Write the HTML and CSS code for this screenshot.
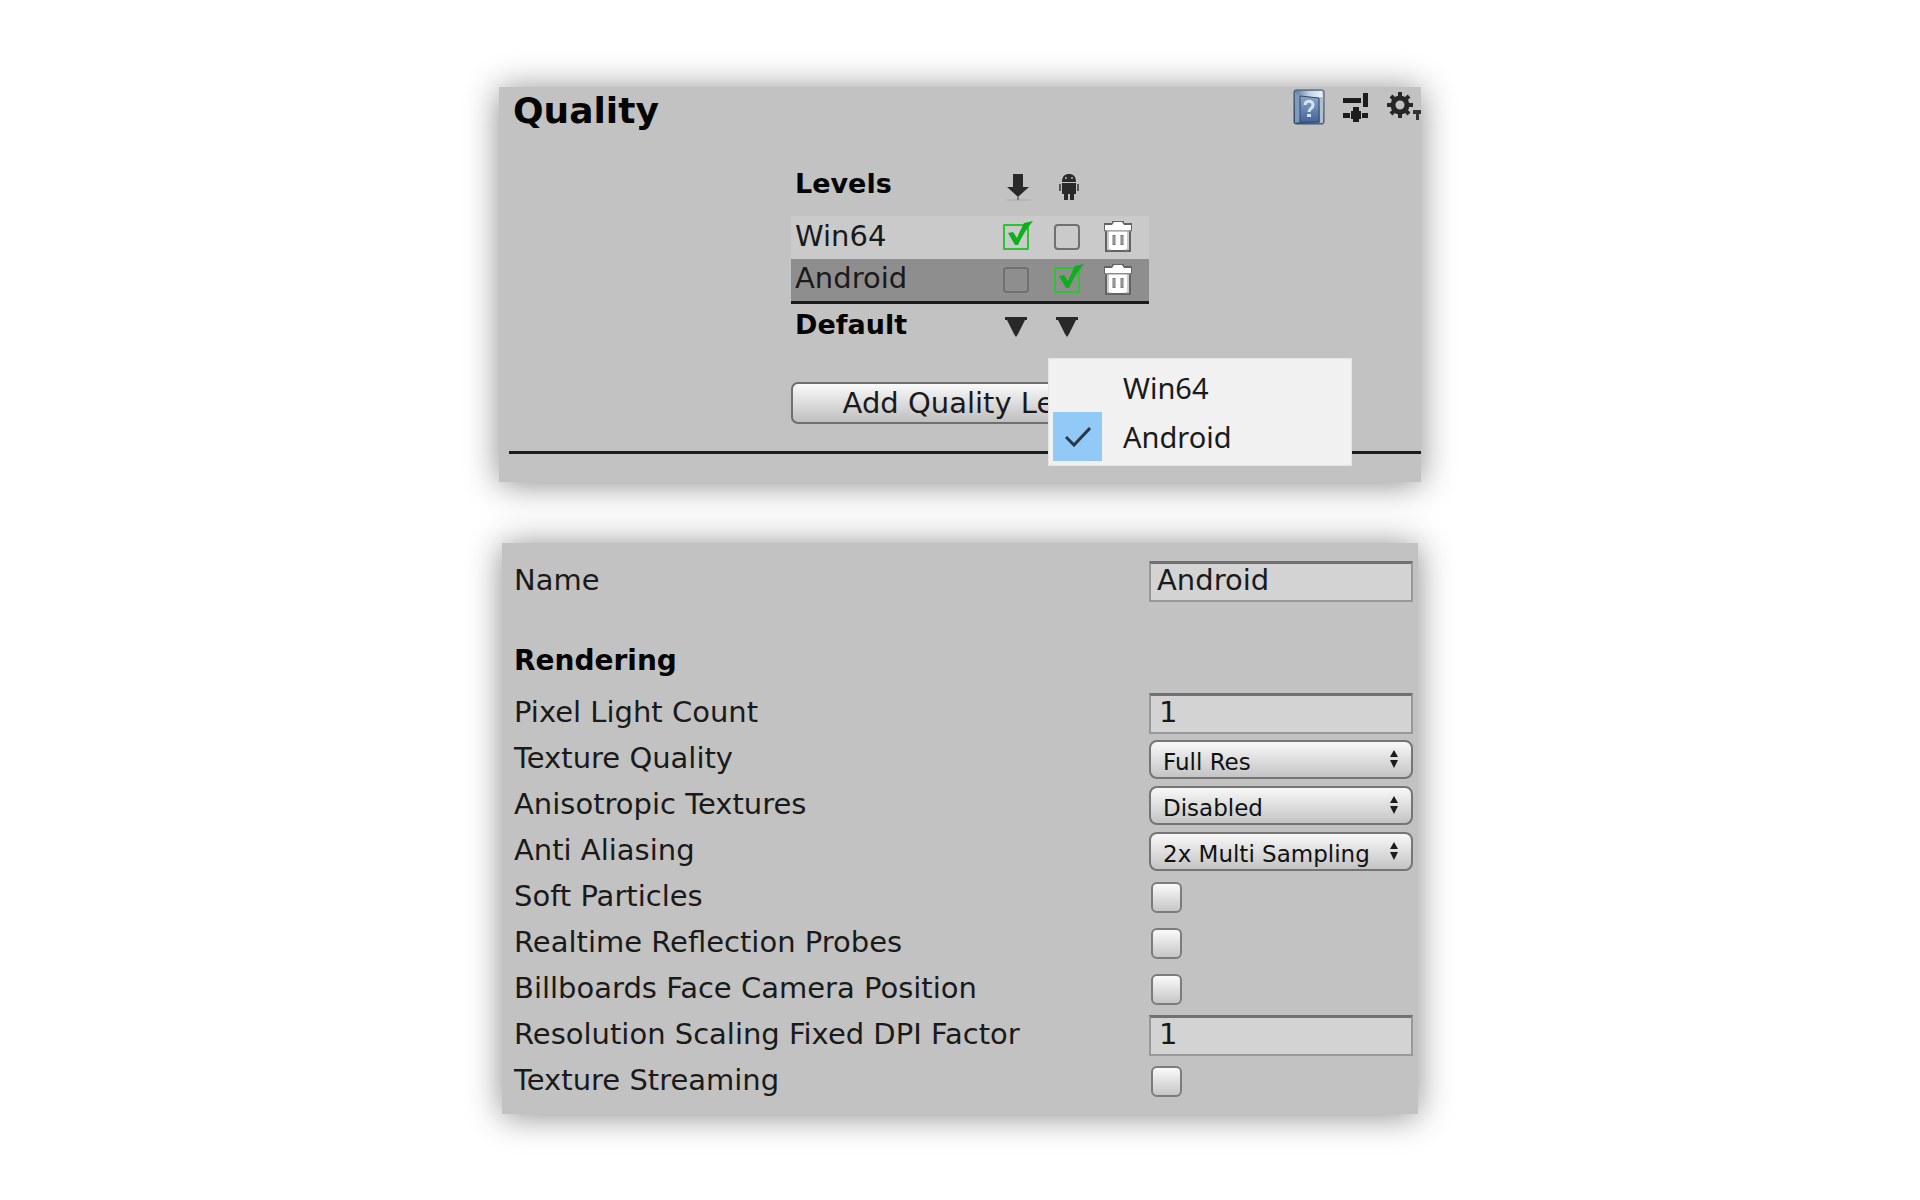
FILE: index.html
```html
<!DOCTYPE html>
<html lang="en">
<head>
<meta charset="utf-8">
<meta name="viewport" content="width=device-width, initial-scale=1">
<title>Quality</title>
<link rel="stylesheet" href="styles.css">
</head>
<body>
<svg class="sprites" aria-hidden="true">
  <defs>
    <symbol id="check" viewBox="0 0 30 30">
      <path d="M5 13L10 12L14 18C17 11 20 5 21 3L30 1C24 8 19 16 15 25H12Z" fill="#0db01c"/>
    </symbol>
    <symbol id="trash" viewBox="0 0 30 33">
      <path d="M2 11V4H10V2H20V4H28V11" fill="none" stroke="#636363" stroke-width="2"/>
      <path d="M3 11V31H27V11" fill="#fff" stroke="#636363" stroke-width="2"/>
      <path d="M5 11V30H8M25 11V30H22" fill="none" stroke="#999" stroke-width="1"/>
      <path d="M2 5H9L11 2H19L21 5H28V10H2Z" fill="#fff"/>
      <path d="M1 11H29" stroke="#8c8c8c" stroke-width="1"/>
      <path d="M11 15V25M19 15V25" stroke="#777" stroke-width="3"/>
      <path d="M11 16V24M19 16V24" stroke="#b5b5b5" stroke-width="1"/>
    </symbol>
    <symbol id="triangle" viewBox="0 0 24 20">
      <path d="M1 0H23V3H21L14 17L12 20L10 17L3 3H1Z" fill="#292929"/>
    </symbol>
    <symbol id="updown" viewBox="0 0 8 18">
      <path d="M4 0L8 7H0ZM4 18L0 10H8Z" fill="#1c1c1c"/>
    </symbol>
  </defs>
</svg>
<main class="page">
  <section class="panel levels-panel">
    <header class="panel-header">
      <h1>Quality</h1>
      <div class="tools">
        <button class="icon-button" aria-label="Help">
          <svg width="32" height="36" viewBox="0 0 32 36">
            <defs>
              <linearGradient id="cover" x1="1" y1="0" x2="0" y2="1"><stop offset="0" stop-color="#bccbdc"/><stop offset=".45" stop-color="#7089ab"/><stop offset="1" stop-color="#29476f"/></linearGradient>
              <linearGradient id="edge" x1="0" y1="0" x2="1" y2="0"><stop offset="0" stop-color="#5d7ea6"/><stop offset=".5" stop-color="#c4d3e2"/><stop offset="1" stop-color="#f0f5f9"/></linearGradient>
              <linearGradient id="face" x1="0" y1="0" x2="0" y2="1"><stop offset="0" stop-color="#8ba6c6"/><stop offset="1" stop-color="#46669a"/></linearGradient>
            </defs>
            <rect x="1" y="1" width="30" height="34" rx="2" fill="url(#cover)" stroke="#3b5067"/>
            <path d="M3 2H29L30 9L7 7Z" fill="url(#edge)"/>
            <path d="M2 3L7 7V33L2 34Z" fill="#7f9bbb"/>
            <path d="M7 7L26 9V33H7Z" fill="url(#face)" stroke="#304b70"/>
            <path d="M27 8H30V34H27Z" fill="#b4bfcc"/>
            <path d="M12 16C12 11 20 11 20 16C20 20 16 19 16 23" fill="none" stroke="#d4e4f3" stroke-width="3"/>
            <rect x="14" y="25" width="4" height="3" fill="#d4e4f3"/>
          </svg>
        </button>
        <button class="icon-button" aria-label="Presets">
          <svg width="26" height="30" viewBox="0 0 26 30" fill="#1d1d1d">
            <path d="M0 6H18V11H0ZM20 1H25V15H20ZM0 21H7V26H0ZM19 21H25V26H19ZM10 15H16V19H18V27H16V30H10V27H8V19H10Z"/>
          </svg>
        </button>
        <button class="icon-button" aria-label="Options">
          <svg width="34" height="30" viewBox="0 0 34 30">
            <circle cx="13" cy="13" r="7" fill="none" stroke="#272727" stroke-width="5"/>
            <path d="M13 0V5M13 21V26M0 13H5M21 13H26M4 4L8 8M18 18L22 22M22 4L18 8M8 18L4 22" stroke="#272727" stroke-width="4"/>
            <path d="M26 18H34V22H32V28H29V22H26Z" fill="#333"/>
          </svg>
        </button>
      </div>
    </header>
    <div class="levels">
      <table>
        <colgroup><col><col class="platform"><col class="platform"><col class="remove"></colgroup>
        <thead>
          <tr>
            <th scope="col">Levels</th>
            <th scope="col" class="platform-icon" aria-label="Standalone"><svg width="26" height="28" viewBox="0 0 26 28"><path d="M8 1H18V14H24L14 23H12L2 14H8Z" fill="#292929"/><path d="M1 27H25" stroke="#aaa" stroke-width="1"/><path d="M13 23V27" stroke="#777" stroke-width="2"/></svg></th>
            <th scope="col" class="platform-icon" aria-label="Android"><svg width="22" height="28" viewBox="0 0 22 28"><path d="M4 9C4 3 7 1 11 1S18 3 18 9ZM4 10H18V21H4ZM6 20H10V27H6ZM12 20H16V27H12Z" fill="#292929"/><path d="M1 11H3V18H1ZM19 11H21V18H19Z" fill="#555"/><circle cx="8" cy="5" r="1" fill="#bbb"/><circle cx="14" cy="5" r="1" fill="#bbb"/></svg></th>
            <td></td>
          </tr>
        </thead>
        <tbody>
          <tr class="level">
            <th scope="row">Win64</th>
            <td><span class="tick"><input type="checkbox" checked aria-label="Win64 on Standalone"><svg><use href="#check"/></svg></span></td>
            <td><span class="tick"><input type="checkbox" aria-label="Win64 on Android"></span></td>
            <td><button class="icon-button" aria-label="Delete Win64"><svg width="30" height="33"><use href="#trash"/></svg></button></td>
          </tr>
          <tr class="level selected">
            <th scope="row">Android</th>
            <td><span class="tick"><input type="checkbox" aria-label="Android on Standalone"></span></td>
            <td><span class="tick"><input type="checkbox" checked aria-label="Android on Android"><svg><use href="#check"/></svg></span></td>
            <td><button class="icon-button" aria-label="Delete Android"><svg width="30" height="33"><use href="#trash"/></svg></button></td>
          </tr>
        </tbody>
        <tfoot>
          <tr>
            <th scope="row">Default</th>
            <td><button class="icon-button" aria-label="Default for Standalone"><svg width="24" height="20"><use href="#triangle"/></svg></button></td>
            <td class="menu-anchor">
              <button class="icon-button" aria-label="Default for Android" aria-expanded="true"><svg width="24" height="20"><use href="#triangle"/></svg></button>
              <div class="menu" role="menu">
                <button role="menuitemradio" aria-checked="false"><span class="mark"></span>Win64</button>
                <button role="menuitemradio" aria-checked="true"><span class="mark"><svg width="26" height="20" viewBox="0 0 26 20"><path d="M1 10L9 18L25 1" fill="none" stroke="#27394a" stroke-width="3"/></svg></span>Android</button>
              </div>
            </td>
            <td></td>
          </tr>
        </tfoot>
      </table>
      <button class="add">Add Quality Level</button>
    </div>
    <hr>
  </section>

  <form class="panel settings">
    <div class="row"><label for="name">Name</label><input type="text" id="name" value="Android"></div>
    <h2>Rendering</h2>
    <div class="row"><label for="lights">Pixel Light Count</label><input type="text" class="number" id="lights" value="1"></div>
    <div class="row"><label for="texture">Texture Quality</label><span class="select"><select id="texture"><option>Full Res</option></select><svg><use href="#updown"/></svg></span></div>
    <div class="row"><label for="aniso">Anisotropic Textures</label><span class="select"><select id="aniso"><option>Disabled</option></select><svg><use href="#updown"/></svg></span></div>
    <div class="row"><label for="aa">Anti Aliasing</label><span class="select"><select id="aa"><option>2x Multi Sampling</option></select><svg><use href="#updown"/></svg></span></div>
    <div class="row"><label for="soft">Soft Particles</label><input type="checkbox" id="soft"></div>
    <div class="row"><label for="probes">Realtime Reflection Probes</label><input type="checkbox" id="probes"></div>
    <div class="row"><label for="billboards">Billboards Face Camera Position</label><input type="checkbox" id="billboards"></div>
    <div class="row"><label for="dpi">Resolution Scaling Fixed DPI Factor</label><input type="text" class="number" id="dpi" value="1"></div>
    <div class="row"><label for="streaming">Texture Streaming</label><input type="checkbox" id="streaming"></div>
  </form>
</main>
</body>
</html>
```
FILE: styles.css
```css
* { box-sizing: border-box; }

body {
  margin: 0;
  background: #fff;
  color: #1a1a1a;
  font: 29px/42px "DejaVu Sans", Verdana, sans-serif;
}

button, input, select {
  margin: 0;
  color: inherit;
  font: inherit;
}

svg { display: block; }
.sprites { position: absolute; width: 0; height: 0; }

.page {
  display: flex;
  flex-direction: column;
  align-items: center;
  gap: 61px;
  padding: 87px 24px 85px;
}

.panel {
  width: 100%;
  background: #c2c2c2;
  box-shadow: 0 2px 32px rgba(0, 0, 0, .46);
}
.levels-panel { max-width: 922px; padding-bottom: 28px; }

.panel-header {
  display: flex;
  justify-content: space-between;
  align-items: flex-start;
  padding-left: 14px;
  margin-bottom: 28px;
}
h1 { margin: 0; color: #050505; font-size: 36px; line-height: 48px; }

.tools { display: flex; align-items: flex-start; gap: 18px; padding-top: 2px; }
.tools .icon-button + .icon-button { padding-top: 3px; }

.icon-button { padding: 0; border: 0; background: none; vertical-align: middle; }

.levels { max-width: 378px; margin: 0 auto; padding-left: 20px; }

table { width: 100%; border-collapse: collapse; table-layout: fixed; }
.platform { width: 51px; }
.remove { width: 57px; }

th, td { padding: 0; vertical-align: middle; }
th { text-align: left; }
tr > :first-child { padding-left: 4px; }
td { text-align: center; }
td:last-child { padding-right: 5px; }

thead th, tfoot th { color: #050505; font-size: 27px; }
thead th { padding-bottom: 11px; }
thead .platform-icon { padding: 0 0 6px 4px; }
.platform-icon svg { margin: 0 auto; }

.level th { padding-bottom: 4px; font-weight: 400; line-height: 38px; }
.level td { padding-bottom: 5px; line-height: 36px; }
.level { height: 43px; background: #cacaca; }
.selected { background: #8e8e8e; border-bottom: 3px solid #1c1c1c; }

tfoot tr { height: 54px; }
tfoot th { padding-bottom: 12px; }
tfoot td { padding-bottom: 10px; line-height: 20px; }

.tick { display: inline-grid; vertical-align: middle; }
.tick > * { grid-area: 1 / 1; }
.tick input {
  appearance: none;
  width: 26px;
  height: 26px;
  border: 2px solid #707070;
  border-radius: 4px;
}
.tick input:checked { border-color: #2cc334; border-radius: 1px; }
.tick svg { width: 30px; height: 30px; margin: -4px -4px 0 0; pointer-events: none; }

.menu-anchor { position: relative; }
.menu {
  position: absolute;
  z-index: 1;
  top: 100%;
  left: 7px;
  width: 304px;
  padding: 4px;
  border: 1px solid #e4e4e4;
  background: #f1f1f1;
}
.menu button {
  display: flex;
  align-items: center;
  gap: 21px;
  width: 100%;
  height: 49px;
  padding: 0;
  border: 0;
  background: none;
  font: 29px/49px "Noto Sans", "Segoe UI", sans-serif;
}
.mark { display: grid; place-items: center; width: 49px; height: 49px; }
[aria-checked="true"] .mark { background: #91c9f7; }

.add {
  display: block;
  width: 100%;
  height: 42px;
  margin-top: 24px;
  padding: 0;
  border: 2px solid #6f6f6f;
  border-radius: 7px;
  background: linear-gradient(#fafafa, #bfbfbf);
  line-height: 38px;
}

hr { height: 3px; margin: 27px 0 0 10px; border: 0; background: #1c1c1c; }

.settings { max-width: 916px; padding: 15px 5px 10px 12px; }
.row { display: grid; grid-template-columns: 1fr 264px; align-items: center; min-height: 46px; }
.row label { padding-bottom: 2px; }

h2 { margin: 37px 0 9px; color: #050505; font-size: 28px; line-height: 40px; }

input[type="text"] {
  width: 100%;
  height: 41px;
  padding: 0 6px 3px;
  border: 2px solid #999;
  border-top: 3px solid #707070;
  background: #d3d3d3;
}
input.number { padding-left: 8px; }

.row input[type="checkbox"] {
  appearance: none;
  width: 31px;
  height: 31px;
  margin-left: 2px;
  border: 2px solid #7c7c7c;
  border-radius: 6px;
  background: linear-gradient(#fafafa, #c6c6c6);
}

.select { display: grid; align-items: center; }
.select > * { grid-area: 1 / 1; }
.select select {
  appearance: none;
  width: 100%;
  height: 39px;
  padding: 5px 30px 0 12px;
  border: 2px solid #757575;
  border-radius: 8px;
  background: linear-gradient(#f8f8f8, #c4c4c4);
  color: #111;
  font-size: 23px;
  line-height: 30px;
}
.select svg { width: 8px; height: 18px; justify-self: end; margin-right: 15px; pointer-events: none; }
```
